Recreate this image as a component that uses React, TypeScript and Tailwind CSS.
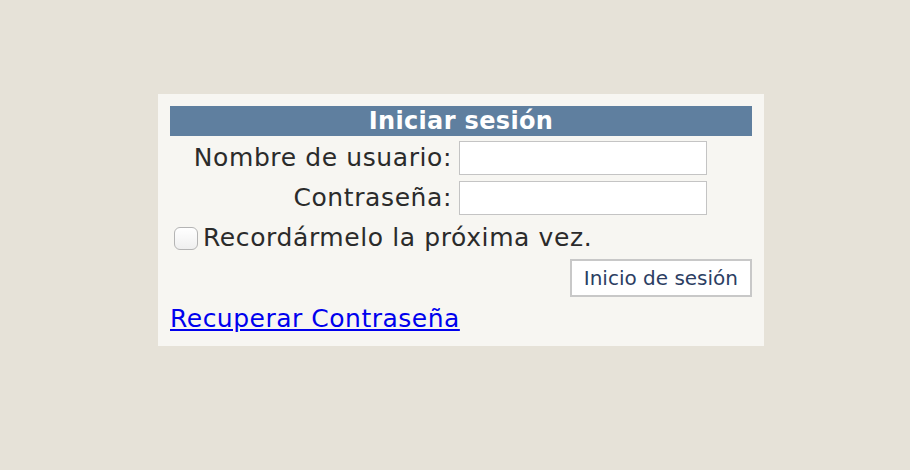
import React from "react";

export default function App() {
  return (
    <div className="min-h-[470px] w-full bg-[#e6e2d8] pt-[94px] pl-[158px]" style={{ fontFamily: '"DejaVu Sans", Verdana, sans-serif' }}>
      <div className="w-[606px] h-[252px] bg-[#f7f6f2] p-3">
        <div className="h-[30px] bg-[#5f7f9f] text-white font-bold text-[24px] tracking-[0.35px] leading-[30px] text-center">
          Iniciar sesión
        </div>
        <div className="mt-[5px] grid grid-cols-[282px_248px] gap-x-[7px] gap-y-[6px] items-center">
          <label className="text-right text-[25px] tracking-[0.6px] leading-[34px] text-[#2b2b2b]">Nombre de usuario:</label>
          <input type="text" className="h-[34px] w-[248px] bg-white border border-[#c4c4c4] outline-none" />
          <label className="text-right text-[25px] tracking-[0.6px] leading-[34px] text-[#2b2b2b]">Contraseña:</label>
          <input type="password" className="h-[34px] w-[248px] bg-white border border-[#c4c4c4] outline-none" />
        </div>
        <div className="mt-[10px] flex items-center h-[26px]">
          <span className="ml-[4px] w-[24px] h-[23px] rounded-[6px] border border-[#b4b4b4] bg-gradient-to-b from-white to-[#efefef]"></span>
          <span className="ml-[5px] text-[25px] tracking-[0.6px] leading-[26px] text-[#2b2b2b]">Recordármelo la próxima vez.</span>
        </div>
        <div className="mt-[8px] flex justify-end">
          <button className="h-[38px] px-[12px] bg-white border-2 border-[#c8c8c8] text-[20px] text-[#2c3e63]">
            Inicio de sesión
          </button>
        </div>
        <div className="mt-[7px]">
          <a href="#" className="text-[25px] tracking-[0.5px] leading-[30px] text-[#0000ee] underline">
            Recuperar Contraseña
          </a>
        </div>
      </div>
    </div>
  );
}
